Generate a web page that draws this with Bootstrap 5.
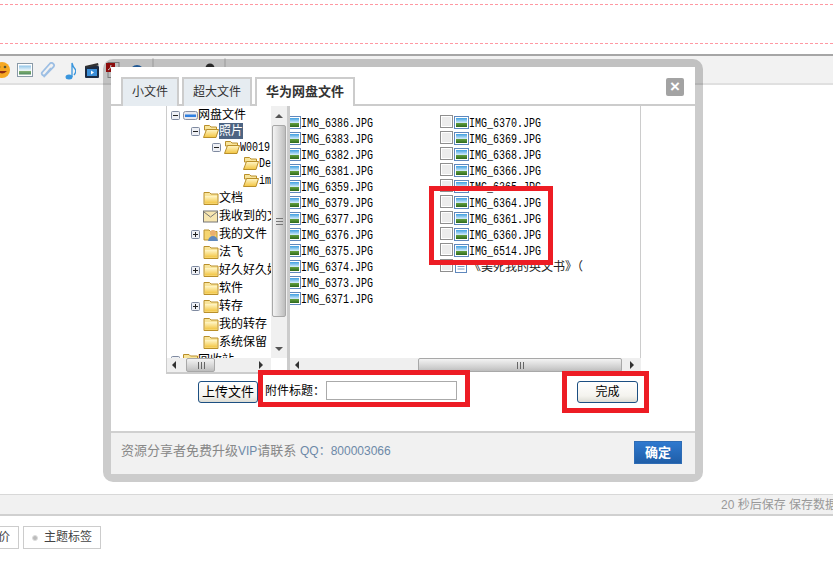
<!DOCTYPE html>
<html lang="zh">
<head>
<meta charset="utf-8">
<title>网盘文件</title>
<link rel="stylesheet" href="https://cdn.jsdelivr.net/npm/bootstrap@5.3.0/dist/css/bootstrap.min.css">
<style>
html,body{height:562px;overflow:hidden}
body{position:relative;width:833px;background:#fff;color:#000;font:12px/16px "Liberation Sans","Noto Sans CJK SC",sans-serif}
.dash-box{margin-top:4px;height:40px;border-top:1px dashed #ff98a2;border-bottom:1px dashed #ff98a2}
.tool-bar{margin-top:10px;height:31px;border-top:2px solid #a6a6a6;border-bottom:2px solid #e0e0e0;background:#f2f2f2;padding-top:6px;position:relative}
.tool-bar svg{flex:none;display:block}
.tool-sep{display:block;width:2px;height:25px;background:#d9d9d9;flex:none;margin-top:-4px}
.tool-pic{margin:1px 0 0 3px}.tool-clip{margin-left:7px}.tool-note{margin-left:9px}.tool-film{margin:1px 0 0 9px}.tool-pdf{margin-left:7px}
.tool-ring{margin:3px 0 0 10px}.tool-sep-a{margin-left:8px}.tool-mini{margin:2px 0 0 33px}.tool-dark{margin:1px 0 0 10px}.tool-sep-b{margin-left:9px}
.edit-area{height:409px}
.status-bar{height:22px;background:#f1f1f1;border-top:1px solid #d8d8d8;border-bottom:2px solid #d0d0d0;color:#999;white-space:nowrap;overflow:hidden;padding-left:721px;line-height:20px}
.post-tabs{margin-top:10px;gap:4px;margin-left:-23px}
.post-tab{height:23px;border:1px solid #ccc;padding:0 8px;line-height:21px;color:#444;font-size:12px;display:flex;align-items:center}
.post-dot{width:6px;height:6px;border-radius:50%;background:#bbb;border:1px solid #ddd;margin-right:6px}
.dlg-outer{position:absolute;left:103px;top:59px;width:600px;height:423px;border:8px solid rgba(0,0,0,.2);border-radius:10px;background-clip:padding-box}
.dlg-inner{background:#fff;height:407px;position:relative}
.tab-strip{height:39px;padding:10px 0 0 10px;border-bottom:2px solid #ccc;gap:3px}
.tab-strip .nav-link{height:29px;border:2px solid #ccc;border-bottom:0;border-radius:0;background:#e6ecf1;color:#333;font-size:12px;line-height:26px;padding:0 9px;margin:0}
.tab-strip .nav-link.active{background:#fff;font-weight:700;font-size:13px;color:#333}
.dlg-close{position:absolute;left:555px;top:11px;width:18px;height:18px;border-radius:2px;background:#a3a3a3;color:#fff;font:700 17px/18px "Liberation Sans",sans-serif;text-align:center}
.pane-wrap{margin-left:55px;width:475px;height:268px;border-left:1px solid #ccc;border-right:1px solid #ccc}
.tree-col{width:120px;height:268px;border-bottom:2px solid #ccc;flex:none;position:relative}
.tree-view{height:252px;width:104px;overflow:hidden;padding-top:1px}
.tree-row{height:18px;display:flex;align-items:center;white-space:nowrap;font-size:12px;line-height:14px;position:relative}
.tree-row.compact{height:16px}
.tree-row svg{flex:none}
.tree-l0{padding-left:4px}.tree-l1{padding-left:24px}.tree-l2{padding-left:45px}.tree-l3{padding-left:76px}.tree-n1{padding-left:36px}
.toggle-box{margin-right:3px}
.tree-sel{background:#4d6482;color:#fff;height:16px;line-height:16px}
.tree-mono{display:inline-block;font:12px/14px "Liberation Mono",monospace;transform:scaleX(.833);transform-origin:0 50%;padding-top:2px}
.vbar{position:absolute;left:104px;top:0;width:16px;height:252px;background:#f0f0f0}
.vthumb{position:absolute;left:1px;top:19px;width:14px;height:192px;border:1px solid #a8a8a8;border-radius:2px;background:linear-gradient(90deg,#f4f4f4,#cfcfcf 70%,#bdbdbd)}
.vgrip{position:absolute;left:3px;top:92px;width:7px;height:7px;background:repeating-linear-gradient(#777 0 1px,transparent 1px 3px)}
.hbar{position:absolute;top:252px;height:14px;background:#efefef}
.hthumb{position:absolute;top:0;height:14px;border:1px solid #a8a8a8;border-radius:2px;background:linear-gradient(#f3f3f3,#cfcfcf 70%,#bdbdbd)}
.hgrip{position:absolute;left:50%;top:3px;width:7px;height:7px;margin-left:-3px;background:repeating-linear-gradient(90deg,#666 0 1px,transparent 1px 3px)}
.arrow{position:absolute;width:0;height:0;border-style:solid;border-color:transparent}
.arrow-up{border-width:0 4px 4px;border-bottom-color:#555}
.arrow-down{border-width:4px 4px 0;border-top-color:#555}
.arrow-left{border-width:4px 4px 4px 0;border-right-color:#333}
.arrow-right{border-width:4px 0 4px 4px;border-left-color:#333}
.pane-gap{width:3px;background:#ccc;height:264px;flex:none}
.list-col{width:351px;flex:none;position:relative;height:268px;overflow:hidden}
.list-side{width:150px;padding-top:10px;flex:none;overflow:hidden}
.list-row{height:16px;display:flex;align-items:center;white-space:nowrap;font:12px/16px "Liberation Mono",monospace}
.list-row svg{flex:none;margin-top:-4px}
.file-name{display:inline-block;transform:scaleX(.833);transform-origin:0 50%}
.list-cjk{font:12px/16px "Liberation Mono","Noto Sans CJK SC",monospace;color:#222}
.pull-icon{margin-left:-4px}
.check-tile{width:13px;height:13px;border:1px solid #8f8f8f;background:#ececec;box-shadow:inset 0 0 0 1px #fff;margin-right:1px;margin-top:-6px;flex:none}
.tool-row{height:57px;position:relative}
.win-btn{height:22px;border:1px solid #1c4f82;border-radius:3px;background:linear-gradient(#fff,#f4f3ee 70%,#dcdcd4);color:#000;font-size:12px;line-height:20px;padding:0;text-align:center}
.upload-btn{position:absolute;left:87px;top:7px;width:60px;font-size:13px}
.done-btn{position:absolute;left:466px;top:7px;width:61px}
.attach-label{position:absolute;left:154px;top:8px;font-size:12px;line-height:18px}
.attach-input{position:absolute;left:215px;top:7px;width:131px;height:19px;border:1px solid #aaa;border-radius:0;padding:0;min-height:0}
.dlg-foot{height:43px;background:#f1f1f1;border-top:2px solid #d0d0d0;padding:0 13px 0 10px;color:#888;font-size:13px}
.foot-note{margin-top:-6px}
.foot-blue{color:#6d89a8;font-size:12px}
.ok-btn{width:48px;height:23px;border:1px solid #2e6cb5;border-radius:0;background:linear-gradient(#2f79cf,#1f5ea8);color:#fff;font-weight:700;font-size:13px;line-height:21px;padding:0;margin-top:-2px}
.red-mark{position:absolute;border:5px solid #ed1c24;pointer-events:none}
</style>
</head>
<body>
<svg width="0" height="0" class="position-absolute">
<defs>
<linearGradient id="fg" x1="0" y1="0" x2="0" y2="1"><stop offset="0" stop-color="#fff6c8"/><stop offset="1" stop-color="#f2c440"/></linearGradient>
<linearGradient id="sky" x1="0" y1="0" x2="0" y2="1"><stop offset="0" stop-color="#3f9fe0"/><stop offset=".55" stop-color="#d8eefa"/><stop offset=".6" stop-color="#5f9a3a"/><stop offset="1" stop-color="#2d6a1e"/></linearGradient>
<linearGradient id="skyp" x1="0" y1="0" x2="0" y2="1"><stop offset="0" stop-color="#8fc4e8"/><stop offset=".55" stop-color="#eef7fb"/><stop offset=".65" stop-color="#7fae70"/><stop offset="1" stop-color="#4f8a60"/></linearGradient>
<symbol id="folder-ic" viewBox="0 0 15 14"><path d="M.5 1.500h5.500l1.500 1.500h7V13.500H.5z" fill="#f8e49a" stroke="#b98f2a"/><path d="M1.500 12.500V5h12v7.500z" fill="url(#fg)"/></symbol>
<symbol id="folder-open" viewBox="0 0 16 14"><path d="M1.500 1.500h5l1.500 1.500h5.500V6H1.500z" fill="#f8e49a" stroke="#b98f2a"/><path d="M.5 13.500l3-8h12l-2.500 8z" fill="url(#fg)" stroke="#b98f2a"/></symbol>
<symbol id="image-ic" viewBox="0 0 15 13"><rect x=".5" y=".5" width="14" height="12" fill="#fff" stroke="#5f88bd"/><rect x="2" y="2" width="11" height="9" fill="url(#sky)"/></symbol>
<symbol id="doc-ic" viewBox="0 0 15 13"><rect x="1.500" y=".5" width="11" height="12" fill="#fff" stroke="#5f88bd"/><path d="M3.500 4h7M3.500 6.500h7M3.500 9h7" stroke="#7c9cc4"/></symbol>
<symbol id="minus-box" viewBox="0 0 9 9"><rect x=".5" y=".5" width="8" height="8" rx="1" fill="#eef0f5" stroke="#7f8aa0"/><path d="M2 4.500h5" stroke="#222"/></symbol>
<symbol id="plus-box" viewBox="0 0 9 9"><rect x=".5" y=".5" width="8" height="8" rx="1" fill="#eef0f5" stroke="#7f8aa0"/><path d="M2 4.500h5M4.500 2v5" stroke="#222"/></symbol>
<symbol id="drive-ic" viewBox="0 0 15 9"><rect x=".5" y=".5" width="14" height="8" rx="2" fill="#e8e8ee" stroke="#8a8fa0"/><rect x="2" y="3.500" width="11" height="2.500" fill="#2f7fe0"/></symbol>
</defs>
</svg>

<div class="dash-box"></div>
<div class="tool-bar d-flex">
  <svg width="14" height="18" viewBox="0 0 14 18"><circle cx="2" cy="8" r="8" fill="#f6a821"/><path d="M-3 9q5 5 10 0z" fill="#8d2c12"/><circle cx="-1" cy="5" r="1.300" fill="#553"/><circle cx="5" cy="5" r="1.300" fill="#553"/></svg>
  <svg width="16" height="14" viewBox="0 0 16 14" class="tool-pic"><rect x=".5" y=".5" width="15" height="13" fill="#fff" stroke="#8a9aa8"/><rect x="2" y="2.500" width="12" height="9" fill="url(#skyp)"/></svg>
  <svg width="16" height="17" viewBox="0 0 16 17" class="tool-clip"><path d="M3.500 15 13.500 5a2.500 2.500 0 0 0-4-3L2 10.500a2 2 0 0 0 3 2.500l6-7" fill="none" stroke="#9dbfe4" stroke-width="1.800"/></svg>
  <svg width="11" height="18" viewBox="0 0 11 18" class="tool-note"><ellipse cx="4" cy="15" rx="3.500" ry="2.500" fill="#3a96dd"/><path d="M7 15V1q1 4 3 6t-1 6" fill="none" stroke="#3a96dd" stroke-width="1.300"/></svg>
  <svg width="14" height="15" viewBox="0 0 14 15" class="tool-film"><rect y="3" width="14" height="12" rx="1" fill="#1c2c44"/><rect x="2" y="6" width="10" height="7" fill="#3a8ed8"/><path d="M0 3 13 0l.6 2.500L1 5z" fill="#333"/><path d="M6 7.500v4l3-2z" fill="#fff"/></svg>
  <svg width="14" height="16" viewBox="0 0 14 16" class="tool-pdf"><rect x="2" y=".5" width="11" height="15" fill="#eee" stroke="#999"/><rect y="1" width="9" height="9" fill="#b01010"/><path d="M2 8q3-1 3-5" stroke="#fff" fill="none"/></svg>
  <svg width="14" height="14" viewBox="0 0 14 14" class="tool-ring"><circle cx="7" cy="7" r="6" fill="none" stroke="#2a6fb8" stroke-width="2"/></svg>
  <span class="tool-sep tool-sep-a"></span>
  <svg width="8" height="8" viewBox="0 0 8 8" class="tool-mini"><path d="M1 4h2M5 4h2" stroke="#333" stroke-width="2"/></svg>
  <svg width="10" height="10" viewBox="0 0 10 10" class="tool-dark"><circle cx="5" cy="5" r="4.500" fill="#333"/></svg>
  <span class="tool-sep tool-sep-b"></span>
</div>
<div class="edit-area"></div>
<div class="status-bar">20 秒后保存 保存数据</div>
<div class="post-tabs d-flex">
  <div class="post-tab">评价</div>
  <div class="post-tab"><span class="post-dot"></span>主题标签</div>
</div>

<div class="dlg-outer">
  <div class="dlg-inner d-flex flex-column">
    <ul class="nav tab-strip flex-nowrap">
      <li class="nav-item"><a class="nav-link" href="#">小文件</a></li>
      <li class="nav-item"><a class="nav-link" href="#">超大文件</a></li>
      <li class="nav-item"><a class="nav-link active" href="#">华为网盘文件</a></li>
    </ul>
    <div class="dlg-close">×</div>
    <div class="pane-wrap d-flex">
      <div class="tree-col">
        <div class="tree-view">
          <div class="tree-row compact tree-l0"><svg class="toggle-box" width="9" height="9"><use href="#minus-box"/></svg><svg width="15" height="9"><use href="#drive-ic"/></svg>网盘文件</div>
          <div class="tree-row compact tree-l1"><svg class="toggle-box" width="9" height="9"><use href="#minus-box"/></svg><svg width="16" height="14"><use href="#folder-open"/></svg><span class="tree-sel">照片</span></div>
          <div class="tree-row compact tree-l2"><svg class="toggle-box" width="9" height="9"><use href="#minus-box"/></svg><svg width="16" height="14"><use href="#folder-open"/></svg><span class="tree-mono">W0019</span></div>
          <div class="tree-row compact tree-l3"><svg width="16" height="14"><use href="#folder-open"/></svg><span class="tree-mono">De</span></div>
          <div class="tree-row tree-l3"><svg width="16" height="14"><use href="#folder-open"/></svg><span class="tree-mono">im</span></div>
          <div class="tree-row tree-n1"><svg width="16" height="14"><use href="#folder-ic"/></svg>文档</div>
          <div class="tree-row tree-n1"><svg width="16" height="15" viewBox="0 0 16 15"><rect x=".5" y="2" width="14" height="11" fill="#f7e6b0" stroke="#777"/><path d="M1 3l6.500 5L14 3" fill="none" stroke="#777"/></svg>我收到的文件</div>
          <div class="tree-row tree-l1"><svg class="toggle-box" width="9" height="9"><use href="#plus-box"/></svg><svg width="16" height="15" viewBox="0 0 16 15"><path d="M1 3h5l1.500 1.500H14V13H1z" fill="#f5d570" stroke="#b9922e"/><circle cx="10" cy="6" r="3" fill="#e8b070"/><path d="M5 14q1-5 5-5t5 5z" fill="#5f88bd"/></svg>我的文件</div>
          <div class="tree-row tree-n1"><svg width="16" height="14"><use href="#folder-ic"/></svg>法飞</div>
          <div class="tree-row tree-l1"><svg class="toggle-box" width="9" height="9"><use href="#plus-box"/></svg><svg width="16" height="14"><use href="#folder-ic"/></svg>好久好久好久</div>
          <div class="tree-row tree-n1"><svg width="16" height="14"><use href="#folder-ic"/></svg>软件</div>
          <div class="tree-row tree-l1"><svg class="toggle-box" width="9" height="9"><use href="#plus-box"/></svg><svg width="16" height="14"><use href="#folder-ic"/></svg>转存</div>
          <div class="tree-row tree-n1"><svg width="16" height="14"><use href="#folder-ic"/></svg>我的转存</div>
          <div class="tree-row tree-n1"><svg width="16" height="14"><use href="#folder-ic"/></svg>系统保留</div>
          <div class="tree-row tree-l0"><svg class="toggle-box" width="9" height="9"><use href="#minus-box"/></svg><svg width="15" height="14"><use href="#folder-ic"/></svg>回收站</div>
        </div>
        <div class="vbar">
          <span class="arrow arrow-up" style="left:4px;top:8px"></span>
          <div class="vthumb"><span class="vgrip"></span></div>
          <span class="arrow arrow-down" style="left:4px;top:241px"></span>
        </div>
        <div class="hbar" style="left:0;width:104px">
          <span class="arrow arrow-left" style="left:5px;top:3px"></span>
          <div class="hthumb" style="left:19px;width:29px"><span class="hgrip"></span></div>
          <span class="arrow arrow-right" style="left:92px;top:3px"></span>
        </div>
      </div>
      <div class="pane-gap"></div>
      <div class="list-col d-flex">
        <div class="list-side">
          <div class="list-row"><svg class="pull-icon" width="15" height="13"><use href="#image-ic"/></svg><span class="file-name">IMG_6386.JPG</span></div>
          <div class="list-row"><svg class="pull-icon" width="15" height="13"><use href="#image-ic"/></svg><span class="file-name">IMG_6383.JPG</span></div>
          <div class="list-row"><svg class="pull-icon" width="15" height="13"><use href="#image-ic"/></svg><span class="file-name">IMG_6382.JPG</span></div>
          <div class="list-row"><svg class="pull-icon" width="15" height="13"><use href="#image-ic"/></svg><span class="file-name">IMG_6381.JPG</span></div>
          <div class="list-row"><svg class="pull-icon" width="15" height="13"><use href="#image-ic"/></svg><span class="file-name">IMG_6359.JPG</span></div>
          <div class="list-row"><svg class="pull-icon" width="15" height="13"><use href="#image-ic"/></svg><span class="file-name">IMG_6379.JPG</span></div>
          <div class="list-row"><svg class="pull-icon" width="15" height="13"><use href="#image-ic"/></svg><span class="file-name">IMG_6377.JPG</span></div>
          <div class="list-row"><svg class="pull-icon" width="15" height="13"><use href="#image-ic"/></svg><span class="file-name">IMG_6376.JPG</span></div>
          <div class="list-row"><svg class="pull-icon" width="15" height="13"><use href="#image-ic"/></svg><span class="file-name">IMG_6375.JPG</span></div>
          <div class="list-row"><svg class="pull-icon" width="15" height="13"><use href="#image-ic"/></svg><span class="file-name">IMG_6374.JPG</span></div>
          <div class="list-row"><svg class="pull-icon" width="15" height="13"><use href="#image-ic"/></svg><span class="file-name">IMG_6373.JPG</span></div>
          <div class="list-row"><svg class="pull-icon" width="15" height="13"><use href="#image-ic"/></svg><span class="file-name">IMG_6371.JPG</span></div>
        </div>
        <div class="list-side flex-grow-1">
          <div class="list-row"><span class="check-tile"></span><svg width="15" height="13"><use href="#image-ic"/></svg><span class="file-name">IMG_6370.JPG</span></div>
          <div class="list-row"><span class="check-tile"></span><svg width="15" height="13"><use href="#image-ic"/></svg><span class="file-name">IMG_6369.JPG</span></div>
          <div class="list-row"><span class="check-tile"></span><svg width="15" height="13"><use href="#image-ic"/></svg><span class="file-name">IMG_6368.JPG</span></div>
          <div class="list-row"><span class="check-tile"></span><svg width="15" height="13"><use href="#image-ic"/></svg><span class="file-name">IMG_6366.JPG</span></div>
          <div class="list-row"><span class="check-tile"></span><svg width="15" height="13"><use href="#image-ic"/></svg><span class="file-name">IMG_6365.JPG</span></div>
          <div class="list-row"><span class="check-tile"></span><svg width="15" height="13"><use href="#image-ic"/></svg><span class="file-name">IMG_6364.JPG</span></div>
          <div class="list-row"><span class="check-tile"></span><svg width="15" height="13"><use href="#image-ic"/></svg><span class="file-name">IMG_6361.JPG</span></div>
          <div class="list-row"><span class="check-tile"></span><svg width="15" height="13"><use href="#image-ic"/></svg><span class="file-name">IMG_6360.JPG</span></div>
          <div class="list-row"><span class="check-tile"></span><svg width="15" height="13"><use href="#image-ic"/></svg><span class="file-name">IMG_6514.JPG</span></div>
          <div class="list-row"><span class="check-tile"></span><svg width="15" height="13"><use href="#doc-ic"/></svg><span class="list-cjk">《美死我的英文书》（</span></div>
        </div>
        <div class="hbar" style="left:0;width:351px">
          <span class="arrow arrow-left" style="left:5px;top:3px"></span>
          <div class="hthumb" style="left:128px;width:204px"><span class="hgrip"></span></div>
          <span class="arrow arrow-right" style="left:340px;top:3px"></span>
        </div>
      </div>
    </div>
    <div class="tool-row">
      <button type="button" class="btn win-btn upload-btn">上传文件</button>
      <span class="attach-label">附件标题：</span>
      <input type="text" class="form-control attach-input" aria-label="附件标题">
      <button type="button" class="btn win-btn done-btn">完成</button>
    </div>
    <div class="dlg-foot d-flex align-items-center justify-content-between">
      <span class="foot-note">资源分享者免费升级<span class="foot-blue">VIP</span>请联系 <span class="foot-blue">QQ：800003066</span></span>
      <button type="button" class="btn ok-btn">确定</button>
    </div>
  </div>
</div>

<div class="red-mark" style="left:429px;top:186px;width:124px;height:79px"></div>
<div class="red-mark" style="left:258px;top:370px;width:212px;height:37px"></div>
<div class="red-mark" style="left:562px;top:371px;width:87px;height:42px"></div>
</body>
</html>
